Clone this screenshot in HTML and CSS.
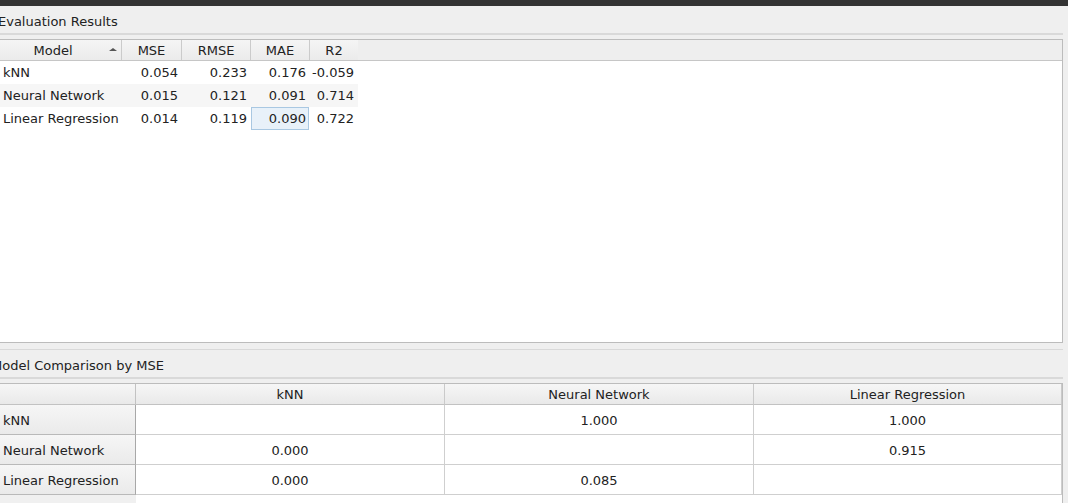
FILE: index.html
```html
<!DOCTYPE html>
<html>
<head>
<meta charset="utf-8">
<link rel="stylesheet" href="styles.css">
</head>
<body>
<div class="topbar"></div>
<div class="app">
  <section class="panel">
    <div class="panel-title title-eval"><span>Evaluation Results</span></div>
    <div class="frame frame-eval">
      <div class="thead">
        <div class="hsec c-model"><span class="hlabel">Model</span><span class="sort"></span></div>
        <div class="hsec c-mse">MSE</div>
        <div class="hsec c-rmse">RMSE</div>
        <div class="hsec c-mae">MAE</div>
        <div class="hsec c-r2">R2</div>
      </div>
      <div class="tbody">
        <div class="row">
          <div class="cell c-model left">kNN</div>
          <div class="cell c-mse">0.054</div>
          <div class="cell c-rmse">0.233</div>
          <div class="cell c-mae">0.176</div>
          <div class="cell c-r2">-0.059</div>
        </div>
        <div class="row alt">
          <div class="cell c-model left">Neural Network</div>
          <div class="cell c-mse">0.015</div>
          <div class="cell c-rmse">0.121</div>
          <div class="cell c-mae">0.091</div>
          <div class="cell c-r2">0.714</div>
        </div>
        <div class="row">
          <div class="cell c-model left">Linear Regression</div>
          <div class="cell c-mse">0.014</div>
          <div class="cell c-rmse">0.119</div>
          <div class="cell c-mae selected">0.090</div>
          <div class="cell c-r2">0.722</div>
        </div>
      </div>
    </div>
  </section>
  <section class="panel panel-cmp">
    <div class="panel-title title-cmp"><span>Model Comparison by MSE</span></div>
    <div class="frame frame-cmp">
      <div class="cmp-grid">
        <div class="corner"></div>
        <div class="chead">kNN</div>
        <div class="chead">Neural Network</div>
        <div class="chead last">Linear Regression</div>

        <div class="rhead">kNN</div>
        <div class="ccell"></div>
        <div class="ccell">1.000</div>
        <div class="ccell last">1.000</div>

        <div class="rhead">Neural Network</div>
        <div class="ccell">0.000</div>
        <div class="ccell"></div>
        <div class="ccell last">0.915</div>

        <div class="rhead">Linear Regression</div>
        <div class="ccell">0.000</div>
        <div class="ccell">0.085</div>
        <div class="ccell last"></div>

        <div class="rfill"></div>
        <div class="cfill"></div>
      </div>
    </div>
  </section>
</div>
</body>
</html>
```

FILE: styles.css
```css
html, body {
  margin: 0;
  padding: 0;
}
body {
  width: 1068px;
  height: 503px;
  overflow: hidden;
  background: #efefef;
  font-family: "DejaVu Sans", "Liberation Sans", sans-serif;
  font-size: 13px;
  color: #222;
}
.topbar {
  height: 6px;
  background: #333333;
}
.app {
  margin-left: -2px;
  margin-right: 5px;
  display: flex;
  flex-direction: column;
}
.panel {
  display: flex;
  flex-direction: column;
}
.panel-title {
  height: 23px;
  padding-top: 4px;
  display: flex;
  align-items: center;
  border-bottom: 2px solid #d9d9d9;
  white-space: nowrap;
}
.title-cmp {
  border-top: 1px solid #d9d9d9;
}
.title-cmp span {
  margin-left: -7px;
}
.frame {
  margin-top: 4px;
  border: 1px solid #bcbcbc;
  background: #ffffff;
}
.frame-eval {
  height: 302px;
  display: flex;
  flex-direction: column;
}
.panel-cmp {
  margin-top: 6px;
}
.frame-cmp {
  height: 140px;
  border-bottom: none;
}

/* evaluation table */
.thead {
  display: flex;
  height: 20px;
  background: #eeeeee;
  border-bottom: 1px solid #c6c6c6;
}
.hsec {
  box-sizing: border-box;
  height: 20px;
  line-height: 22px;
  text-align: center;
  background: linear-gradient(#f5f5f5, #ebebeb);
  border-right: 1px solid #cbcbcb;
  position: relative;
}
.c-model { width: 123px; }
.c-mse { width: 60px; }
.c-rmse { width: 69px; }
.c-mae { width: 59px; }
.c-r2 { width: 48px; }
.hsec.c-r2 { border-right: none; }
.hsec.c-model {
  padding-right: 14px;
}
.sort {
  position: absolute;
  right: 4px;
  top: 8px;
  width: 0;
  height: 0;
  border-left: 4px solid transparent;
  border-right: 4px solid transparent;
  border-bottom: 3px solid #555;
}
.tbody {
  flex: 1;
  background: #fff;
}
.row {
  display: flex;
  height: 23px;
}
.row.alt .cell {
  background: #f6f6f6;
}
.cell {
  box-sizing: border-box;
  height: 23px;
  line-height: 23px;
  text-align: right;
  padding-right: 4px;
  white-space: nowrap;
}
.cell.left {
  text-align: left;
  padding-left: 4px;
  padding-right: 0;
}
.cell.selected {
  background: #e8f1f9;
  border: 1px solid #a9c8e2;
  line-height: 21px;
  padding-right: 2px;
  margin-right: 1px;
  width: 58px;
}

/* comparison table */
.cmp-grid {
  display: grid;
  grid-template-columns: 137px 309px 309px 308px;
  grid-template-rows: 21px 30px 30px 30px 1fr;
  height: 140px;
  background: #fff;
}
.corner, .chead {
  box-sizing: border-box;
  background: linear-gradient(#f6f6f6, #e9e9e9);
  border-bottom: 1px solid #c2c2c2;
  border-right: 1px solid #cacaca;
  text-align: center;
  line-height: 22px;
  white-space: nowrap;
}
.corner {
  border-right: 1px solid #c2c2c2;
}
.rhead {
  box-sizing: border-box;
  background: linear-gradient(#f6f6f6, #eaeaea);
  border-right: 1px solid #a8a8a8;
  border-bottom: 1px solid #b9b9b9;
  line-height: 31px;
  padding-left: 4px;
  white-space: nowrap;
}
.ccell {
  box-sizing: border-box;
  border-right: 1px solid #cfcfcf;
  border-bottom: 1px solid #cfcfcf;
  text-align: center;
  line-height: 31px;
}
.rfill {
  background: #f0f0f0;
}
.cfill {
  grid-column: 2 / 5;
  background: #fff;
}
```
